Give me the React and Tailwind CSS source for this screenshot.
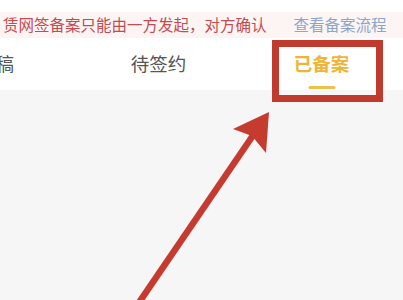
import React from "react";

export default function App() {
  const font = { fontFamily: '"Noto Sans CJK SC", "Noto Sans", sans-serif' };
  return (
    <div className="relative w-[403px] h-[300px] overflow-hidden bg-[#f6f6f6]" style={font}>
      <div className="h-[12px] bg-white" />
      <div className="h-[26px] bg-[#fcf5f3] flex items-center whitespace-nowrap pl-[3px] text-[15.5px] leading-none">
        <span className="text-[#c64a52]">赁网签备案只能由一方发起，对方确认</span>
        <span className="ml-[27px] text-[#8ea5cb]">查看备案流程</span>
      </div>
      <div className="h-[52px] bg-white flex ml-[-86px] whitespace-nowrap">
        <div className="w-[167px] flex items-center justify-center text-[18.5px] text-[#555]">草稿</div>
        <div className="w-[167px] flex items-center justify-center text-[18.5px] text-[#555]">待签约</div>
        <div className="w-[167px] relative flex items-center justify-center text-[18.5px] font-bold text-[#efb437]">
          已备案
          <div className="absolute bottom-[1px] left-1/2 -translate-x-1/2 w-[27px] h-[3px] rounded-full bg-[#efc04a]" />
        </div>
      </div>
      <div className="absolute left-[272px] top-[40px] w-[111px] h-[62px] border-[7px] border-[#c13a2e]" />
      <svg className="absolute inset-0" width="403" height="300" viewBox="0 0 403 300">
        <line x1="138" y1="304" x2="256" y2="131" stroke="#c63b30" strokeWidth="6.5" />
        <polygon points="269,112 233,129 252,136 266,153" fill="#c63b30" />
      </svg>
    </div>
  );
}
